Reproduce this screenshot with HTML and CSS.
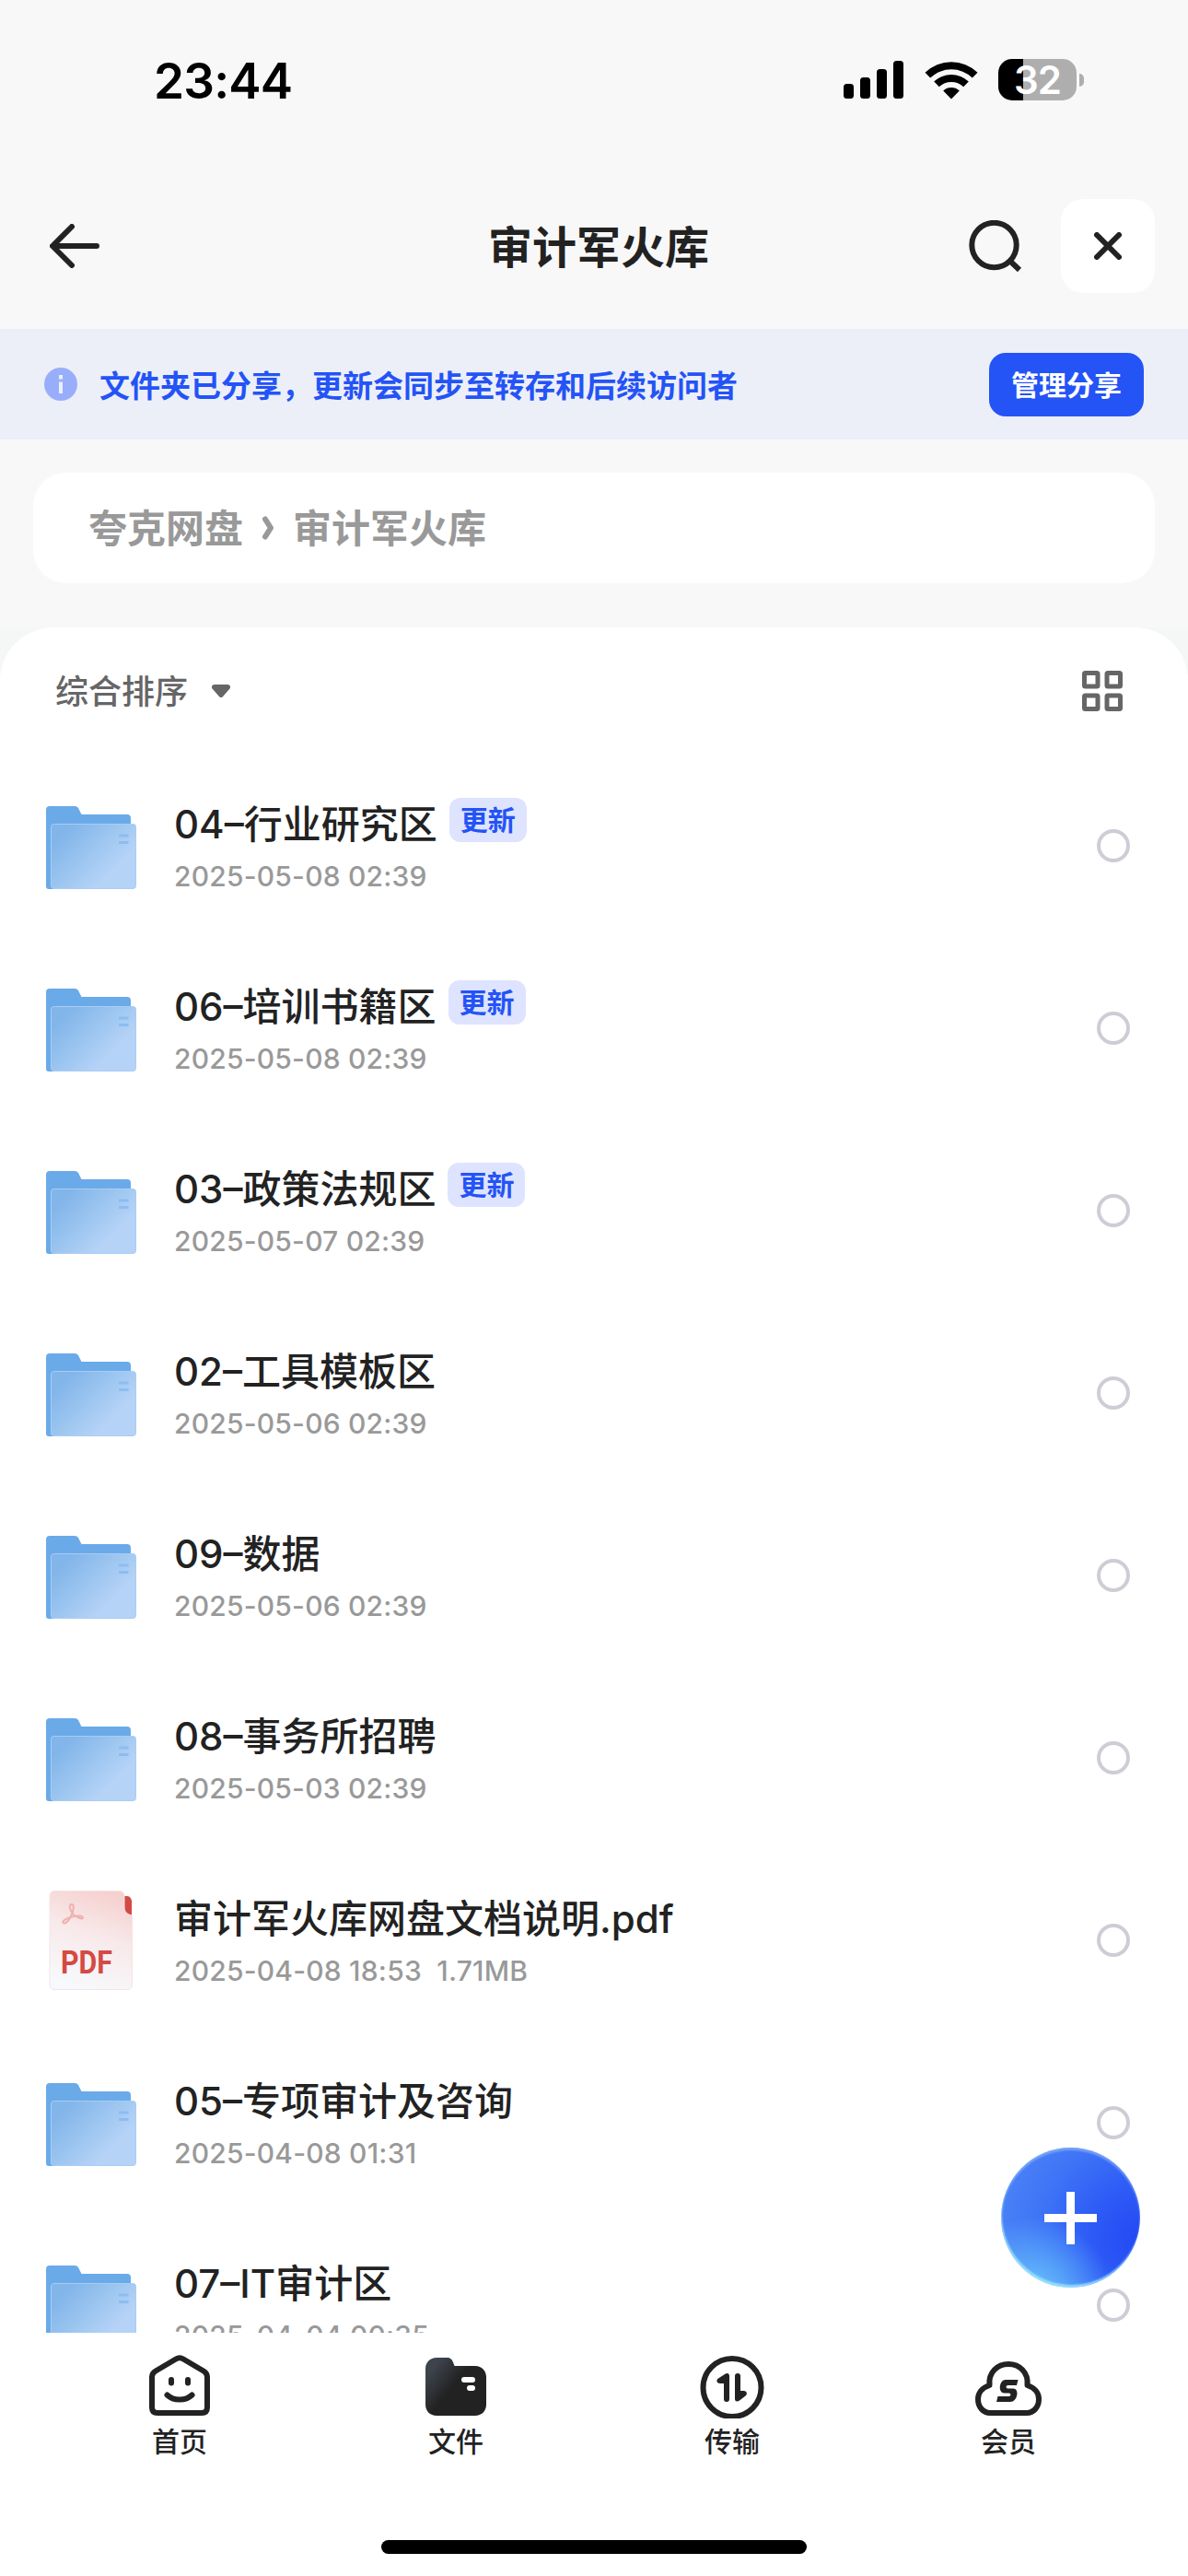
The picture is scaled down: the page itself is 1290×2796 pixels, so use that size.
FILE: index.html
```html
<!DOCTYPE html>
<html lang="zh-CN">
<head>
  <meta charset="UTF-8" />
  <meta name="viewport" content="width=device-width, initial-scale=1.0"/>
  <title>审计军火库</title>
  <link rel="stylesheet" href="styles.css">
</head>
<body>
  <svg class="defs" width="0" height="0">
    <defs>
      <linearGradient id="folder-front" x1="0.1" y1="0.2" x2="0.9" y2="0.8">
        <stop offset="0" stop-color="#82b5e9"/>
        <stop offset="0.5" stop-color="#a0c8f1"/>
        <stop offset="0.8" stop-color="#b5d2f7"/>
        <stop offset="1" stop-color="#b5d2f7"/>
      </linearGradient>
      <linearGradient id="pdf-page" x1="0.7" y1="0" x2="0.4" y2="1">
        <stop offset="0" stop-color="#f5d0ce"/>
        <stop offset="0.45" stop-color="#f8e9ea"/>
        <stop offset="1" stop-color="#f7f9fc"/>
      </linearGradient>
      <linearGradient id="tab-folder" x1="0" y1="0.15" x2="0.6" y2="0.6">
        <stop offset="0.15" stop-color="#3e444d"/>
        <stop offset="0.75" stop-color="#222"/>
      </linearGradient>
    </defs>
    <symbol id="folder" viewBox="0 0 98 90">
      <path d="M0 4a4 4 0 0 1 4-4h27c2 0 3.200.8 4 2l3.500 7H88a4 4 0 0 1 4 4v30H20v47H3a3 3 0 0 1-3-3z" fill="#6aaae9"/>
      <rect x="5.500" y="19.500" width="92" height="70" rx="3" fill="url(#folder-front)" stroke="#a9cdf3" stroke-width="1"/>
      <path d="M79 32h10.500M79 39.500h10.500" stroke="#8dbdf0" stroke-width="3"/>
    </symbol>
  </svg>

  <div class="status-bar">
    <div class="time">23:44</div>
    <div class="status-icons">
      <svg class="signal" width="66" height="42" viewBox="0 0 66 42">
        <rect x="0" y="25" width="11" height="16" rx="3.500"/>
        <rect x="18" y="18" width="11" height="23" rx="3.500"/>
        <rect x="36" y="9" width="11" height="32" rx="3.500"/>
        <rect x="54" y="0" width="11" height="41" rx="3.500"/>
      </svg>
      <svg class="wifi" width="58" height="42" viewBox="0 0 58 42">
        <path d="M0.500 12.800a41 41 0 0 1 57 0l-5.700 5.700a33 33 0 0 0-45.600 0z"/>
        <path d="M10.200 22.500a27.300 27.300 0 0 1 37.600 0l-5.600 5.700a19.300 19.300 0 0 0-26.400 0z"/>
        <path d="M20.200 32.400a13 13 0 0 1 17.600 0L29 41.500z"/>
      </svg>
      <div class="battery"><span>32</span></div>
    </div>
  </div>

  <header>
    <svg class="back" width="54" height="48" viewBox="0 0 54 48">
      <path d="M24 3L3 24l21 21M3.500 24H51"/>
    </svg>
    <h1>审计军火库</h1>
    <div class="actions">
      <svg class="search" width="58" height="56" viewBox="0 0 58 56">
        <circle cx="27.500" cy="27" r="24.200"/>
        <path d="M45 44.500l10 9.500"/>
      </svg>
      <button class="close">
        <svg width="30" height="30" viewBox="0 0 30 30"><path d="M3 3l24 24M27 3L3 27"/></svg>
      </button>
    </div>
  </header>

  <div class="notice">
    <svg width="36" height="36" viewBox="0 0 36 36">
      <circle cx="18" cy="18" r="18" fill="#99aefb"/>
      <path d="M16 8h4v4.500h-4zM16 15.500h4V28h-4z" fill="#eceffa"/>
    </svg>
    <p>文件夹已分享，更新会同步至转存和后续访问者</p>
    <button>管理分享</button>
  </div>

  <nav class="crumbs">
    <span>夸克网盘</span>
    <svg width="13" height="26" viewBox="0 0 13 26"><path d="M3 3.500l6 9.500-6 9.500"/></svg>
    <span>审计军火库</span>
  </nav>

  <div class="panel-wrap">
    <main class="panel">
      <div class="toolbar">
        <div class="sort">
          <span>综合排序</span>
          <svg width="20" height="14" viewBox="0 0 20 14"><path d="M3 0h14c3 0 4 3 2 5l-6.500 7.500c-1.500 2-3.500 2-5 0L1 5C-1 3 0 0 3 0z"/></svg>
        </div>
        <svg class="grid-icon" width="44" height="44" viewBox="0 0 44 44">
          <rect x="2.500" y="2.500" width="14.500" height="14.500" rx="1"/>
          <rect x="27" y="2.500" width="14.500" height="14.500" rx="1"/>
          <rect x="2.500" y="27" width="14.500" height="14.500" rx="1"/>
          <rect x="27" y="27" width="14.500" height="14.500" rx="1"/>
        </svg>
      </div>

      <ul class="files">
        <li class="file">
          <svg class="thumb"><use href="#folder"/></svg>
          <div class="info"><h3>04–行业研究区 <em>更新</em></h3><p>2025-05-08 02:39</p></div>
          <i class="radio"></i>
        </li>
        <li class="file">
          <svg class="thumb"><use href="#folder"/></svg>
          <div class="info"><h3>06–培训书籍区 <em>更新</em></h3><p>2025-05-08 02:39</p></div>
          <i class="radio"></i>
        </li>
        <li class="file">
          <svg class="thumb"><use href="#folder"/></svg>
          <div class="info"><h3>03–政策法规区 <em>更新</em></h3><p>2025-05-07 02:39</p></div>
          <i class="radio"></i>
        </li>
        <li class="file">
          <svg class="thumb"><use href="#folder"/></svg>
          <div class="info"><h3>02–工具模板区</h3><p>2025-05-06 02:39</p></div>
          <i class="radio"></i>
        </li>
        <li class="file">
          <svg class="thumb"><use href="#folder"/></svg>
          <div class="info"><h3>09–数据</h3><p>2025-05-06 02:39</p></div>
          <i class="radio"></i>
        </li>
        <li class="file">
          <svg class="thumb"><use href="#folder"/></svg>
          <div class="info"><h3>08–事务所招聘</h3><p>2025-05-03 02:39</p></div>
          <i class="radio"></i>
        </li>
        <li class="file">
          <svg class="thumb pdf" viewBox="0 0 98 108">
            <path d="M84 6h4c3 0 5 3 5 6v15c-5-1-9-4-9-9z" fill="#d44a43"/>
            <path d="M9 .5h71a5 5 0 0 1 5 5V18c0 5 3 8 8.500 9v75.500a5 5 0 0 1-5 5H9a5 5 0 0 1-5-5v-97a5 5 0 0 1 5-5z" fill="url(#pdf-page)" stroke="#f4e4e7"/>
            <path d="M28 15c3 0 2 7-1 13s-7 9-8.500 7 4-5 9.500-6.500 12-1.500 12 1-8-.5-11.500-5-3.500-9.500-.5-9.500z" fill="none" stroke="#eeb0ae" stroke-width="2"/>
            <text x="16" y="89.500" textLength="56" lengthAdjust="spacingAndGlyphs">PDF</text>
          </svg>
          <div class="info"><h3>审计军火库网盘文档说明.pdf</h3><p>2025-04-08 18:53&nbsp; 1.71MB</p></div>
          <i class="radio"></i>
        </li>
        <li class="file">
          <svg class="thumb"><use href="#folder"/></svg>
          <div class="info"><h3>05–专项审计及咨询</h3><p>2025-04-08 01:31</p></div>
          <i class="radio"></i>
        </li>
        <li class="file">
          <svg class="thumb"><use href="#folder"/></svg>
          <div class="info"><h3>07–IT审计区</h3><p>2025-04-04 00:35</p></div>
          <i class="radio"></i>
        </li>
      </ul>
    </main>
  </div>

  <button class="fab">
    <svg width="57" height="57" viewBox="0 0 57 57"><path d="M28.500 0v57M0 28.500h57"/></svg>
  </button>

  <footer>
    <div class="tabs">
      <a class="tab">
        <svg width="72" height="72" viewBox="0 0 72 72">
          <path class="line" d="M32 7.500L10 20.500C7.500 22 6 24.500 6 27v33c0 4 2 6 6 6h48c4 0 6-2 6-6V27c0-2.500-1.500-5-4-6.500L40 7.500c-3-1.800-5-1.800-8 0z"/>
          <path class="line" d="M22.500 46.500c7 6.700 20 6.700 27 0"/>
          <rect x="24" y="27" width="6" height="9.500" rx="3"/>
          <rect x="42" y="27" width="6" height="9.500" rx="3"/>
        </svg>
        首页
      </a>
      <a class="tab">
        <svg width="72" height="72" viewBox="0 0 72 72">
          <path fill="url(#tab-folder)" d="M15 6h11c4 0 6 2 7 5l1.500 4H57c7 0 12 5 12 12v30c0 7-5 12-12 12H15C8 69 3 64 3 57V18C3 11 8 6 15 6z"/>
          <rect x="42" y="27" width="15" height="6" rx="3" fill="#fff"/>
          <rect x="48" y="36" width="9" height="6" rx="3" fill="#fff"/>
        </svg>
        文件
      </a>
      <a class="tab">
        <svg width="72" height="72" viewBox="0 0 72 72">
          <circle class="line" cx="36" cy="38.500" r="31.500"/>
          <path d="M21 28.500l7-4.500c3-2 5-.5 5 2V51a3 3 0 0 1-6 0V34h-4c-3.500 0-5-3.500-2-5.500zM39 26a3 3 0 0 1 6 0v16h3.500c3.500 0 4.500 3.500 2 5.500l-6.500 5c-3 2-5 .5-5-1.500z"/>
        </svg>
        传输
      </a>
      <a class="tab">
        <svg width="72" height="72" viewBox="0 0 72 72">
          <path class="line" d="M16 66h40C63 66 69 60 69 51c0-7-5-12.500-12.500-15C58 22 48 13 36 13S14 22 15.500 36C8 38.500 3 44 3 51c0 9 6 15 13 15z"/>
          <path d="M33 30h13.500l-1.500 6H35.500c-2.500 0-2.500 3.500 0 3.500h5.500c7.500 0 5 14.500-3 14.500H23l1.500-6H36.500c2.500 0 2.500-3.500 0-3.500H32C24 44.500 26 30 33 30z"/>
        </svg>
        会员
      </a>
    </div>
    <div class="home-indicator"></div>
  </footer>
</body>
</html>
```
FILE: styles.css
```css
* {
  box-sizing: border-box;
  margin: 0;
  padding: 0;
}

body {
  font-family: Inter, "Noto Sans CJK SC", sans-serif;
  width: 1290px;
  height: 2796px;
  background: #f8f8f8;
  color: #222;
  display: flex;
  flex-direction: column;
  overflow: hidden;
  position: relative;
}

button {
  font-family: inherit;
  border: none;
}

.defs {
  position: absolute;
}

/* status bar */
.status-bar {
  height: 177px;
  padding: 0 113px 0 167px;
  display: flex;
  justify-content: space-between;
  align-items: flex-start;
}

.time {
  color: #000;
  font-size: 53px;
  font-weight: 600;
  letter-spacing: -0.8px;
  line-height: 64px;
  margin-top: 56px;
}

.status-icons {
  display: flex;
  align-items: center;
  margin-top: 64px;
}

.signal {
  margin-top: 1px;
}

.wifi {
  margin: 0 22px 0 22px;
}

.battery {
  width: 85px;
  height: 45px;
  border-radius: 15px;
  background: linear-gradient(90deg, #000 27px, #aeaeae 27px);
  margin-right: 8px;
  position: relative;
  text-align: center;
}

.battery span {
  color: #fff;
  font-size: 42px;
  font-weight: 600;
  letter-spacing: -1px;
  line-height: 46px;
}

.battery::after {
  content: "";
  position: absolute;
  right: -8px;
  top: 16px;
  width: 5px;
  height: 14px;
  background: #aeaeae;
  border-radius: 0 5px 5px 0;
}

/* title bar */
header {
  height: 180px;
  padding: 0 36px 0 54px;
  display: grid;
  grid-template-columns: 1fr auto 1fr;
  align-items: center;
}

header svg {
  fill: none;
  stroke: #222;
  stroke-width: 6;
  stroke-linecap: round;
  stroke-linejoin: round;
}

header h1 {
  font-size: 48px;
  font-weight: 700;
  margin: 0 8px 4px 0;
}

.actions {
  display: flex;
  justify-content: flex-end;
  align-items: center;
  gap: 42px;
}

.actions .search {
  stroke-linecap: butt;
}

.close {
  width: 102px;
  height: 102px;
  border-radius: 24px;
  background: #fff;
  display: flex;
  align-items: center;
  justify-content: center;
}

/* share notice */
.notice {
  height: 120px;
  padding: 0 48px;
  background: #eceff8;
  display: flex;
  align-items: center;
}

.notice p {
  flex: 1;
  margin-left: 24px;
  color: #2453f6;
  font-size: 33px;
  font-weight: 700;
}

.notice button {
  width: 168px;
  height: 69px;
  padding-bottom: 3px;
  border-radius: 18px;
  background: #2453f6;
  color: #fff;
  font-size: 30px;
  font-weight: 700;
}

.crumbs {
  height: 120px;
  margin: 36px 36px 48px;
  padding-left: 60px;
  border-radius: 36px;
  background: #fff;
  color: #999;
  font-size: 42px;
  font-weight: 700;
  display: flex;
  align-items: center;
}

.crumbs span {
  margin-bottom: 5px;
}

.crumbs svg {
  margin: 0 20px 0 21px;
  fill: none;
  stroke: #999;
  stroke-width: 6;
  stroke-linecap: round;
  stroke-linejoin: round;
}

/* file list */
.panel-wrap {
  height: 1851px;
  background: #f5f7f7;
  overflow: hidden;
}

.panel {
  background: #fff;
  border-radius: 58px 58px 0 0;
}

.toolbar {
  height: 138px;
  padding: 0 71px 0 60px;
  display: flex;
  justify-content: space-between;
  align-items: center;
}

.sort {
  color: #666;
  font-size: 36px;
  font-weight: 500;
  display: flex;
  align-items: center;
  gap: 26px;
}

.sort span {
  margin-bottom: 4px;
}

.sort svg {
  fill: #666;
}

.grid-icon {
  fill: none;
  stroke: #666;
  stroke-width: 5;
}

.files {
  list-style: none;
}

.file {
  height: 198px;
  padding: 0 63px 0 50px;
  display: flex;
  align-items: center;
}

.thumb {
  width: 98px;
  height: 90px;
  margin-top: 3px;
}

.pdf {
  height: 108px;
  margin-top: 0;
}

.pdf text {
  fill: #d44a43;
  font-family: Roboto, sans-serif;
  font-size: 35px;
  font-weight: 700;
}

.info {
  flex: 1;
  margin-left: 41px;
}

.info h3 {
  display: flex;
  align-items: center;
  font-size: 42px;
  font-weight: 500;
  line-height: 60px;
}

.info em {
  width: 84px;
  height: 48px;
  margin: -10px 0 0 13px;
  border-radius: 12px;
  background: #dee4ff;
  color: #2453f6;
  font-size: 30px;
  font-style: normal;
  font-weight: 700;
  line-height: 48px;
  text-align: center;
}

.info p {
  color: #999;
  font-size: 30px;
  font-weight: 500;
  line-height: 42px;
  margin-top: 5px;
  letter-spacing: 0.2px;
}

.radio {
  width: 36px;
  height: 36px;
  border: 4px solid #cdcdd5;
  border-radius: 50%;
}

.fab {
  position: absolute;
  left: 1087px;
  top: 2331px;
  width: 151px;
  height: 152px;
  border-radius: 50%;
  background:
    radial-gradient(circle at 22% 108%, #6cd0fb 0%, rgba(98, 184, 250, 0.8) 16%, rgba(80, 140, 248, 0) 44%),
    radial-gradient(circle at 100% 65%, #2448f4 0%, #2e5cf6 32%, #3f74f6 62%, #5088f6 100%);
  box-shadow: inset 0 3px 2px rgba(150, 190, 250, 0.6), inset 1px -3px 2px rgba(160, 235, 252, 0.8);
  display: flex;
  align-items: center;
  justify-content: center;
}

.fab svg {
  stroke: #fff;
  stroke-width: 9;
}

/* bottom tabs */
footer {
  height: 264px;
  background: #fff;
}

.tabs {
  height: 225px;
  padding: 21px 45px 0;
  display: grid;
  grid-template-columns: repeat(4, 1fr);
}

.tab {
  display: flex;
  flex-direction: column;
  align-items: center;
  font-size: 30px;
  font-weight: 500;
  line-height: 48px;
}

.tab svg {
  fill: #222;
  margin-bottom: 1px;
}

.tab .line {
  fill: none;
  stroke: #222;
  stroke-width: 6;
  stroke-linecap: round;
  stroke-linejoin: round;
}

.home-indicator {
  width: 462px;
  height: 15px;
  margin: 0 auto;
  border-radius: 8px;
  background: #000;
}
```
